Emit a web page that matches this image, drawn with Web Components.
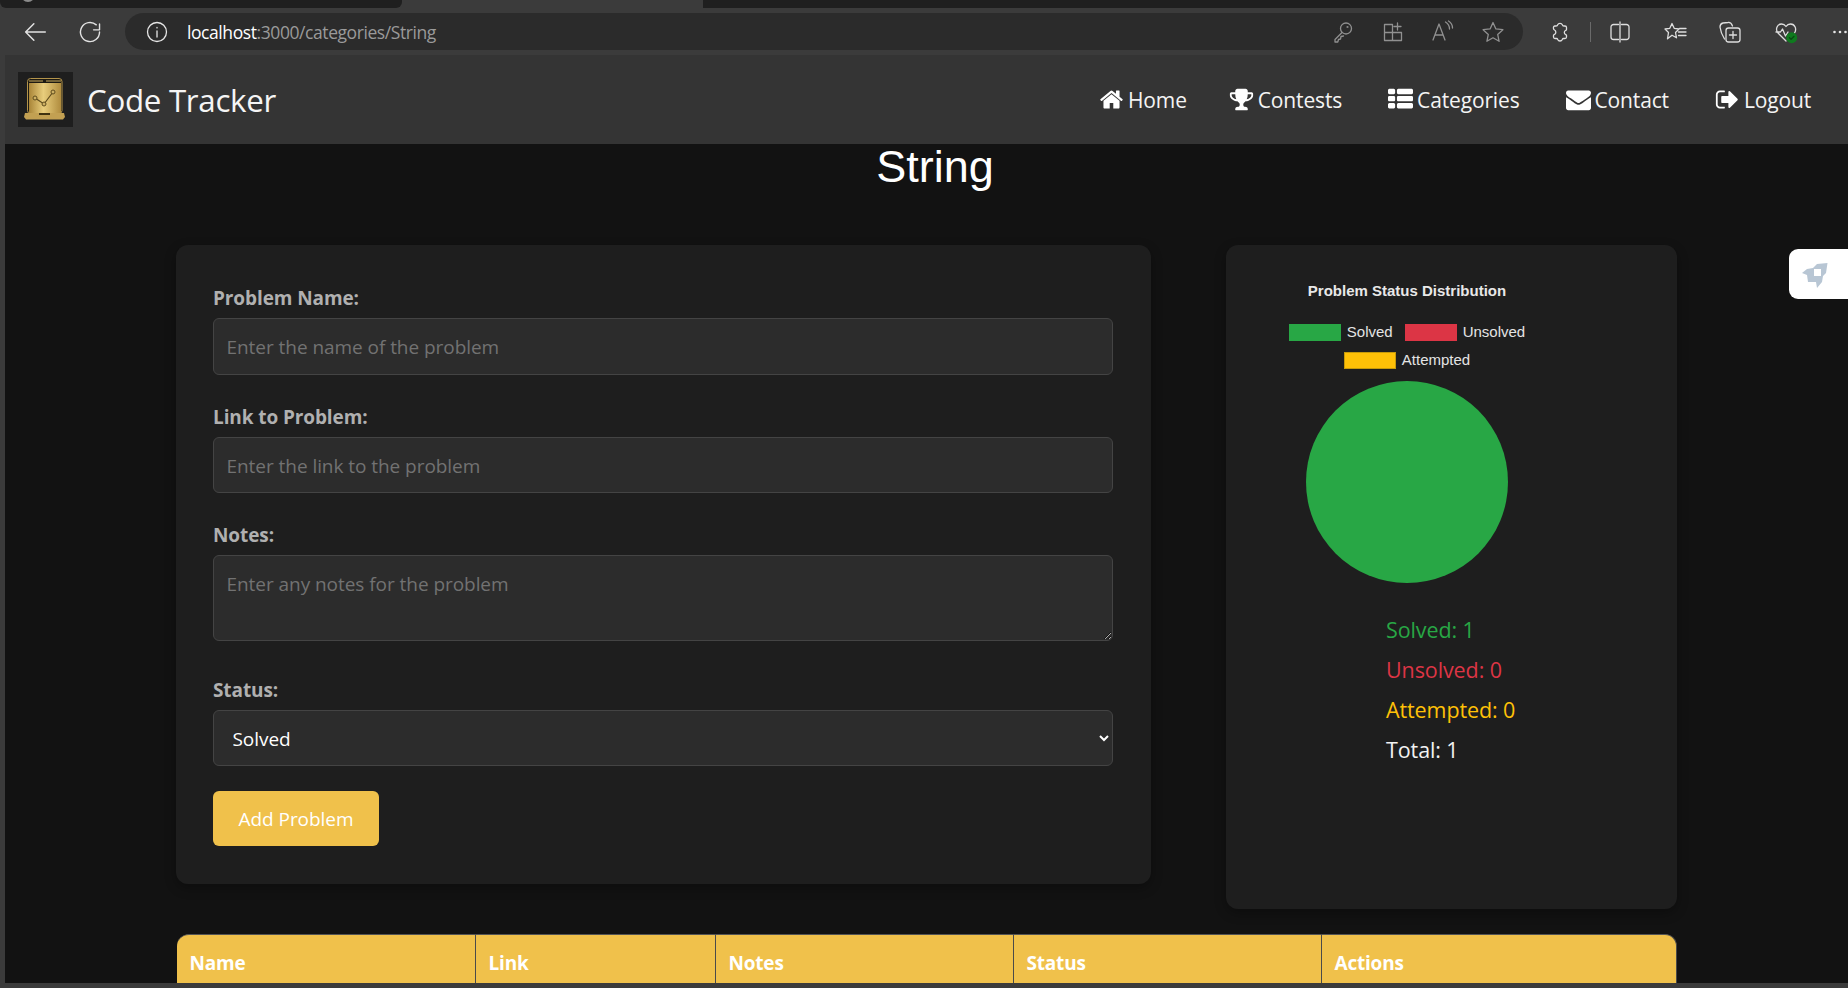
<!DOCTYPE html>
<html lang="en"><head><meta charset="utf-8"><title>Code Tracker</title>
<style>
html,body{margin:0;padding:0;height:100%;overflow:hidden;background:#3b3b3b}
body{font-family:"Open Sans","Noto Sans",sans-serif}
</style></head><body>
<app-shell>
  <browser-chrome slot="chrome"></browser-chrome>
  <site-nav slot="stage"></site-nav>
  <category-page slot="stage"></category-page>
</app-shell>
<script>
const def=(n,html,extra)=>{customElements.define(n,class extends HTMLElement{constructor(){super();this.attachShadow({mode:'open'}).innerHTML=html;}connectedCallback(){extra&&extra(this)}})};
const FA={
home:'M1472 992v480q0 26-19 45t-45 19h-384v-384h-256v384h-384q-26 0-45-19t-19-45v-480q0-1 .5-3t.5-3l575-474 575 474q1 2 1 6zm223-69l-62 74q-8 9-21 11h-3q-13 0-21-7l-692-577-692 577q-12 8-24 7-13-2-21-11l-62-74q-8-10-7-23.500t11-21.500l719-599q32-26 76-26t76 26l244 204v-195q0-14 9-23t23-9h192q14 0 23 9t9 23v408l219 182q10 8 11 21.500t-7 23.500z',
trophy:'M522 883q-74-162-74-371h-256v96q0 78 94.500 162t235.500 113zm1078-275v-96h-256q0 209-74 371 141-29 235.500-113t94.500-162zm128-128v128q0 71-41.500 143t-112 130-173 97.500-215.500 44.500q-42 54-95 95-38 34-52.500 72.500t-14.500 89.500q0 54 30.500 91t97.500 37q75 0 133.500 45.500t58.500 114.500v64q0 14-9 23t-23 9h-832q-14 0-23-9t-9-23v-64q0-69 58.500-114.500t133.500-45.500q67 0 97.500-37t30.500-91q0-51-14.500-89.500t-52.500-72.500q-53-41-95-95-113-5-215.500-44.500t-173-97.500-112-130-41.500-143v-128q0-40 28-68t68-28h288v-96q0-66 47-113t113-47h576q66 0 113 47t47 113v96h288q40 0 68 28t28 68z',
list:'M512 1248v192q0 40-28 68t-68 28h-320q-40 0-68-28t-28-68v-192q0-40 28-68t68-28h320q40 0 68 28t28 68zm0-512v192q0 40-28 68t-68 28h-320q-40 0-68-28t-28-68v-192q0-40 28-68t68-28h320q40 0 68 28t28 68zm1280 512v192q0 40-28 68t-68 28h-960q-40 0-68-28t-28-68v-192q0-40 28-68t68-28h960q40 0 68 28t28 68zm-1280-1024v192q0 40-28 68t-68 28h-320q-40 0-68-28t-28-68v-192q0-40 28-68t68-28h320q40 0 68 28t28 68zm1280 512v192q0 40-28 68t-68 28h-960q-40 0-68-28t-28-68v-192q0-40 28-68t68-28h960q40 0 68 28t28 68zm0-512v192q0 40-28 68t-68 28h-960q-40 0-68-28t-28-68v-192q0-40 28-68t68-28h960q40 0 68 28t28 68z',
mail:'M1792 710v794q0 66-47 113t-113 47h-1472q-66 0-113-47t-47-113v-794q44 49 101 87 362 246 497 345 57 42 92.500 65.500t94.500 48 110 24.500h2q51 0 110-24.500t94.500-48 92.500-65.500q170-123 498-345 57-39 100-87zm0-294q0 79-49 151t-122 123q-376 261-468 325-10 7-42.500 30.500t-54 38-52 32.500-57.500 27-50 9h-2q-23 0-50-9t-57.500-27-52-32.500-54-38-42.500-30.500q-91-64-262-182.500t-205-142.500q-62-42-117-115.500t-55-136.500q0-78 41.500-130t118.500-52h1472q65 0 112.500 47t47.500 113z',
out:'M704 1440q0 4 1 20t.5 26.500-3 23.500-10 19.500-20.500 6.500h-320q-119 0-203.500-84.500t-84.500-203.500v-704q0-119 84.500-203.500t203.500-84.500h320q13 0 22.500 9.500t9.500 22.500q0 4 1 20t.5 26.500-3 23.500-10 19.500-20.500 6.500h-320q-66 0-113 47t-47 113v704q0 66 47 113t113 47h312l11.500 1 11.500 3 8 5.500 7 9 2 13.500zm928-544q0 26-19 45l-544 544q-19 19-45 19t-45-19-19-45v-288h-448q-26 0-45-19t-19-45v-384q0-26 19-45t45-19h448v-288q0-26 19-45t45-19 45 19l544 544q19 19 19 45z'};

def('app-shell',`<style>:host{display:flex;flex-direction:column;height:988px;overflow:hidden;background:#3b3b3b}
.stage{flex:1;min-height:0;margin:0 0 5px 5px;background:#121212;overflow:hidden;position:relative;display:flex;flex-direction:column}</style>
<slot name="chrome"></slot><div class="stage"><slot name="stage"></slot></div>`);

const I=(w,inner,extra='')=>`<svg width="${w}" height="${w}" viewBox="0 0 24 24" fill="none" stroke="currentColor" stroke-width="1.3" stroke-linecap="round" stroke-linejoin="round" ${extra}>${inner}</svg>`;
def('browser-chrome',`<style>:host{display:block;height:55px;background:#3b3b3b;font-family:"Open Sans",sans-serif}
.tabs{display:flex;height:8px}.t1{width:402px;background:#1f1f1f;border-radius:0 0 6px 6px;position:relative;overflow:hidden}.t1 i{position:absolute;left:21px;top:-12px;width:14px;height:14px;border-radius:50%;background:#8b8b8b}.t2{width:301px}.t3{flex:1;background:#1f1f1f}
.bar{display:flex;align-items:center;height:47px;color:#e2e2e2;box-sizing:border-box}
.btn{display:flex;justify-content:center;align-items:center;flex:none}
.addr{width:1398px;height:37px;flex:none;background:#2b2b2b;border-radius:19px;display:flex;align-items:center;color:#909090;box-sizing:border-box}
.info{margin-left:20px;color:#e6e6e6;display:flex}
.url{margin-left:18px;font-size:17.500px;letter-spacing:-.42px;color:#9a9a9a;white-space:nowrap;flex:1}.url b{font-weight:400;color:#fff}
.r{display:flex;align-items:center}
.i{width:24px;display:flex;flex:none;position:relative}
.sep{width:1px;height:20px;background:#6a6a6a;flex:none}
.tools{display:flex;align-items:center;color:#dedede}
svg{overflow:visible}
</style>
<div class="tabs"><div class="t1"><i></i></div><div class="t2"></div><div class="t3"></div></div>
<div class="bar">
<div class="btn" style="width:70px">${I(28,'<path d="M20.800 12H4M11 5l-7 7 7 7"/>')}</div>
<div class="btn" style="width:40px">${I(26,'<path d="M20.800 12a8.800 8.800 0 1 1-3-6.600M20.800 4.500V10h-5.500"/>')}</div>
<div style="width:15px"></div>
<div class="addr"><span class="info">${I(24,'<circle cx="12" cy="12" r="9.500"/><path d="M12 11v6M12 7.500v.4"/>')}</span><span class="url"><b>localhost</b>:3000/categories/String</span>
<div class="r">
<span class="i">${I(24,'<circle cx="15" cy="8.500" r="5.500"/><path d="M11 12.500 4 19.500V22h2.800l.7-2.500 2-.5.500-2.500 2.500-.5"/><circle cx="16.500" cy="7" r=".4"/>')}</span>
<span style="width:26px"></span>
<span class="i">${I(24,'<path d="M3.500 4.500h8v16h-8zM3.500 12.500h17v8h-9v-8M16.500 3v7M13 6.500h7"/>')}</span>
<span style="width:25px"></span>
<span class="i">${I(24,'<path d="M3 20 9 4l6 16M5 15h8M15.500 2c2.500 1.500 4 3.500 4 7M18.500 1c2.500 1.500 4 4 4 7"/>')}</span>
<span style="width:27px"></span>
<span class="i">${I(24,'<path d="m12 2.500 2.900 6.400 7 .8-5.200 4.700 1.400 6.900-6.100-3.500-6.100 3.500 1.400-6.900-5.200-4.700 7-.8z"/>')}</span>
<span style="width:18px"></span>
</div></div>
<div class="tools" style="margin-left:25px">
<span class="i">${I(24,'<path d="M9.500 5a2.800 2.800 0 0 1 5 0c0 .8.500 1 1.500 1h1a1.500 1.500 0 0 1 1.500 1.500v2c0 .8-.5.8-1 1a2.300 2.300 0 0 0 0 4c.5.200 1 .3 1 1v1.500a1.500 1.500 0 0 1-1.500 1.500h-1.500c-.8 0-1 .5-1.200 1a2.500 2.500 0 0 1-4.600 0c-.2-.5-.4-1-1.200-1H7a1.500 1.500 0 0 1-1.500-1.500v-1.500c0-.8.500-1 1-1.200a2.400 2.400 0 0 0 0-4.300c-.5-.2-1-.4-1-1.200v-.8A1.500 1.500 0 0 1 7 6h1c1 0 1.500-.2 1.500-1z"/>')}</span>
<span class="sep" style="margin:0 17px 0 18px"></span>
<span class="i">${I(24,'<path d="M10.500 4.500h-5a2.500 2.500 0 0 0-2.500 2.500v10a2.500 2.500 0 0 0 2.500 2.500h5M13.500 4.500h5A2.500 2.500 0 0 1 21 7v10a2.500 2.500 0 0 1-2.500 2.500h-5M12 2v20"/>')}</span>
<span style="width:32px"></span>
<span class="i">${I(24,'<path d="m8 3.500 2.200 4.800 4.800.7-3.500 3.500 1 5.300-4.500-2.600-4.500 3.600 1-6.300L1 9l4.800-.7zM15.500 8.500H22M14.500 12H22M14.500 15.500H22"/>')}</span>
<span style="width:30px"></span>
<span class="i">${I(24,'<path d="M6.500 19C4 15 2.500 11 2 7c0-2 1-3.500 3-4l5-.5c2-.3 3.500.7 4.500 3.500"/><rect x="8" y="8" width="14" height="14" rx="2.500"/><path d="M15 11.500v7M11.500 15h7"/>')}</span>
<span style="width:32px"></span>
<span class="i">${I(24,'<path d="M12 21 4 13C1 9.500 3 4 7.500 4c2 0 3.500 1 4.500 2.500C13 5 14.500 4 16.500 4c4.500 0 6.500 5 4 9M2 12h4.500l2-3 3 7 2.500-4"/><circle cx="17.700" cy="17.700" r="5.500" fill="#0f7a1f" stroke="none"/><path d="m15.500 17.700 1.600 1.600 2.800-2.800" stroke="#0a4a14"/>')}</span>
<span style="width:35px"></span>
<svg width="14" height="4" viewBox="0 0 14 4" style="flex:none"><circle cx="1.500" cy="2" r="1.300" fill="#e6e6e6"/><circle cx="7" cy="2" r="1.300" fill="#e6e6e6"/><circle cx="12.500" cy="2" r="1.300" fill="#e6e6e6"/></svg>
</div></div>`);

def('site-nav',`<style>:host{display:flex;align-items:center;height:89px;flex:none;background:#343434;color:#fff;padding:0 37px 0 13px;box-sizing:border-box}
.logo{width:55px;height:55px;flex:none;display:block}
.brand{font-size:31.300px;margin-left:14px;color:#f5f5f5;letter-spacing:-.3px;font-weight:400}
.sp{flex:1}
nav{display:flex;gap:46px}</style>
<svg class="logo" viewBox="0 0 55 55"><defs><linearGradient id="g" x1="0" x2="1"><stop offset="0" stop-color="#a98538"/><stop offset=".45" stop-color="#e8cd7c"/><stop offset="1" stop-color="#b08c3e"/></linearGradient></defs>
<rect width="55" height="55" fill="#1e1e1e"/><rect x="9.500" y="6.500" width="34.500" height="35" rx="3" fill="#1d1a12" stroke="#b3944b"/><rect x="11" y="11" width="32" height="30" fill="url(#g)"/><path d="M11 9h14M28 9h15" stroke="#c9a95c" stroke-width="1"/>
<path d="M17 26l9 6 9-12" fill="none" stroke="#5f4c1d" stroke-width="1.200"/><circle cx="17" cy="26" r="2" fill="#cdb063" stroke="#5f4c1d"/><circle cx="26" cy="32" r="2" fill="#cdb063" stroke="#5f4c1d"/><circle cx="35" cy="20" r="2" fill="#cdb063" stroke="#5f4c1d"/>
<path d="M7 41h39l1 4-2 2.500H8L6 45z" fill="#c2a052"/><rect x="21" y="41" width="11" height="2" fill="#3f3210"/></svg>
<span class="brand">Code Tracker</span><span class="sp"></span>
<nav><nav-link icon="home" style="margin-right:-4px">Home</nav-link><nav-link icon="trophy">Contests</nav-link><nav-link icon="list">Categories</nav-link><nav-link icon="mail">Contact</nav-link><nav-link icon="out">Logout</nav-link></nav>`);

customElements.define('nav-link',class extends HTMLElement{constructor(){super();this.attachShadow({mode:'open'});}connectedCallback(){
this.shadowRoot.innerHTML=`<style>:host{display:inline-flex;align-items:center;gap:4px;font-size:21px;color:#f4f4f4;letter-spacing:-.15px}svg{width:25px;height:25px;fill:#fff;flex:none}</style><svg viewBox="0 0 1792 1792"><path d="${FA[this.getAttribute('icon')]}"/></svg><slot></slot>`}});

def('category-page',`<style>:host{display:block;flex:none;color:#fff}
h1{margin:0;height:46px;font:400 45px/46px "Liberation Sans",Arial,sans-serif;text-align:center;padding-left:17px;color:#fff}
.wrap{width:1501px;margin:55px auto 0}
.row{display:grid;grid-template-columns:975px 450.500px;gap:75px;align-items:start}
.tb{margin-top:25px}
.rocket{position:absolute;right:0;top:194px;width:59px;height:50px;background:#fff;border-radius:9px 0 0 9px}
.rocket svg{position:absolute;left:-9px;top:-9px}</style>
<h1>String</h1>
<div class="wrap"><div class="row"><problem-form></problem-form><stats-card></stats-card></div>
<problem-table class="tb"></problem-table></div>
<div class="rocket"><svg width="68" height="66" viewBox="0 0 68 66"><path fill="#b8c6d4" fill-rule="evenodd" d="M37 24 47.500 23 46 33l-3 3-1 6-5 6-1-6h-8l-1-7-5-2 5-4 6-1zM34 29v7h7v-7z"/></svg></div>`);

def('problem-form',`<style>:host{display:block;background:#1e1e1e;border-radius:12px;box-shadow:0 4px 12px rgba(0,0,0,.3);padding:41px 38px 38px 37px;height:639px;box-sizing:border-box;font-family:"Open Sans",sans-serif}
label{display:block;height:24px;line-height:24px;margin-bottom:8px;font-weight:700;font-size:19px;letter-spacing:-.1px;color:#b0b0b0}
.c{display:block;width:100%;box-sizing:border-box;background:#2c2c2c;border:1px solid #444;border-radius:6px;color:#fff;font:19px "Open Sans",sans-serif;letter-spacing:-.05px;padding:0 12.500px;margin:0;outline:none}
.c::placeholder{color:#727272;opacity:1}
input.c{height:56.500px;margin-bottom:30px;padding-top:2px}
textarea.c{height:86px;padding-top:15px;margin-bottom:37px;resize:vertical;color-scheme:dark}
select.c{height:56px;margin-bottom:25px;color-scheme:dark;padding:2px 12.500px 0 14.500px}
button{display:block;width:166px;height:55px;background:#f0c14b;color:#fff;border:0;border-radius:6px;font:19px "Open Sans",sans-serif;letter-spacing:-.05px;padding:0}
</style>
<label>Problem Name:</label><input class="c" placeholder="Enter the name of the problem">
<label>Link to Problem:</label><input class="c" placeholder="Enter the link to the problem">
<label>Notes:</label><textarea class="c" placeholder="Enter any notes for the problem"></textarea>
<label>Status:</label><select class="c"><option>Solved</option><option>Unsolved</option><option>Attempted</option></select>
<button>Add Problem</button>`);

def('stats-card',`<style>:host{display:block;background:#1e1e1e;border-radius:12px;box-shadow:0 4px 12px rgba(0,0,0,.3);height:664px;box-sizing:border-box;padding:0 0 0 63px;font-family:"Liberation Sans",Arial,sans-serif}
.chart{width:236px;display:flex;flex-direction:column;align-items:center}
.title{font-weight:700;font-size:15px;color:#e8e8e8;margin-top:37px;height:18px;line-height:18px;white-space:nowrap}
.leg{display:flex;gap:12px;justify-content:center;font-size:15px;color:#e4e4e4;height:16px;line-height:16px;white-space:nowrap}
.leg span{display:flex;align-items:center;gap:6px}
.leg i{display:block;width:52px;height:17px;box-sizing:border-box}
.pie{width:202px;height:202px;border-radius:50%;background:#28a745;margin-top:13px;flex:none}
.s{padding-left:97px;margin-top:27px;font:21.500px/40px "Open Sans",sans-serif;letter-spacing:-.1px}
.s div{height:40px}</style>
<div class="chart"><div class="title">Problem Status Distribution</div>
<div class="leg" style="margin-top:24px"><span><i style="background:#28a745"></i>Solved</span><span><i style="background:#dc3545"></i>Unsolved</span></div>
<div class="leg" style="margin-top:12px"><span><i style="background:#ffc107;border:1px solid #c79a0a"></i>Attempted</span></div>
<div class="pie"></div></div>
<div class="s"><div style="color:#28a745">Solved: 1</div><div style="color:#dc3545">Unsolved: 0</div><div style="color:#ffc107">Attempted: 0</div><div style="color:#f2f2f2">Total: 1</div></div>`);

def('problem-table',`<style>:host{display:block;font-family:"Open Sans",sans-serif}
table{width:1499.500px;margin-left:1px;border-collapse:separate;border-spacing:0;table-layout:fixed}
th{background:#f0c14b;color:#fff;text-align:left;font-weight:700;font-size:19px;letter-spacing:-.2px;height:56px;box-sizing:border-box;padding:0 0 0 12.500px;border-top:1px solid #555;border-left:1px solid #4a4a4a}
th:first-child{border-top-left-radius:12px;border-left:0}th:last-child{border-top-right-radius:12px;border-right:1px solid #4a4a4a}</style>
<table><colgroup><col style="width:298px"><col style="width:240px"><col style="width:298px"><col style="width:308px"><col></colgroup><thead><tr><th>Name</th><th>Link</th><th>Notes</th><th>Status</th><th>Actions</th></tr></thead></table>`);
</script></body></html>
